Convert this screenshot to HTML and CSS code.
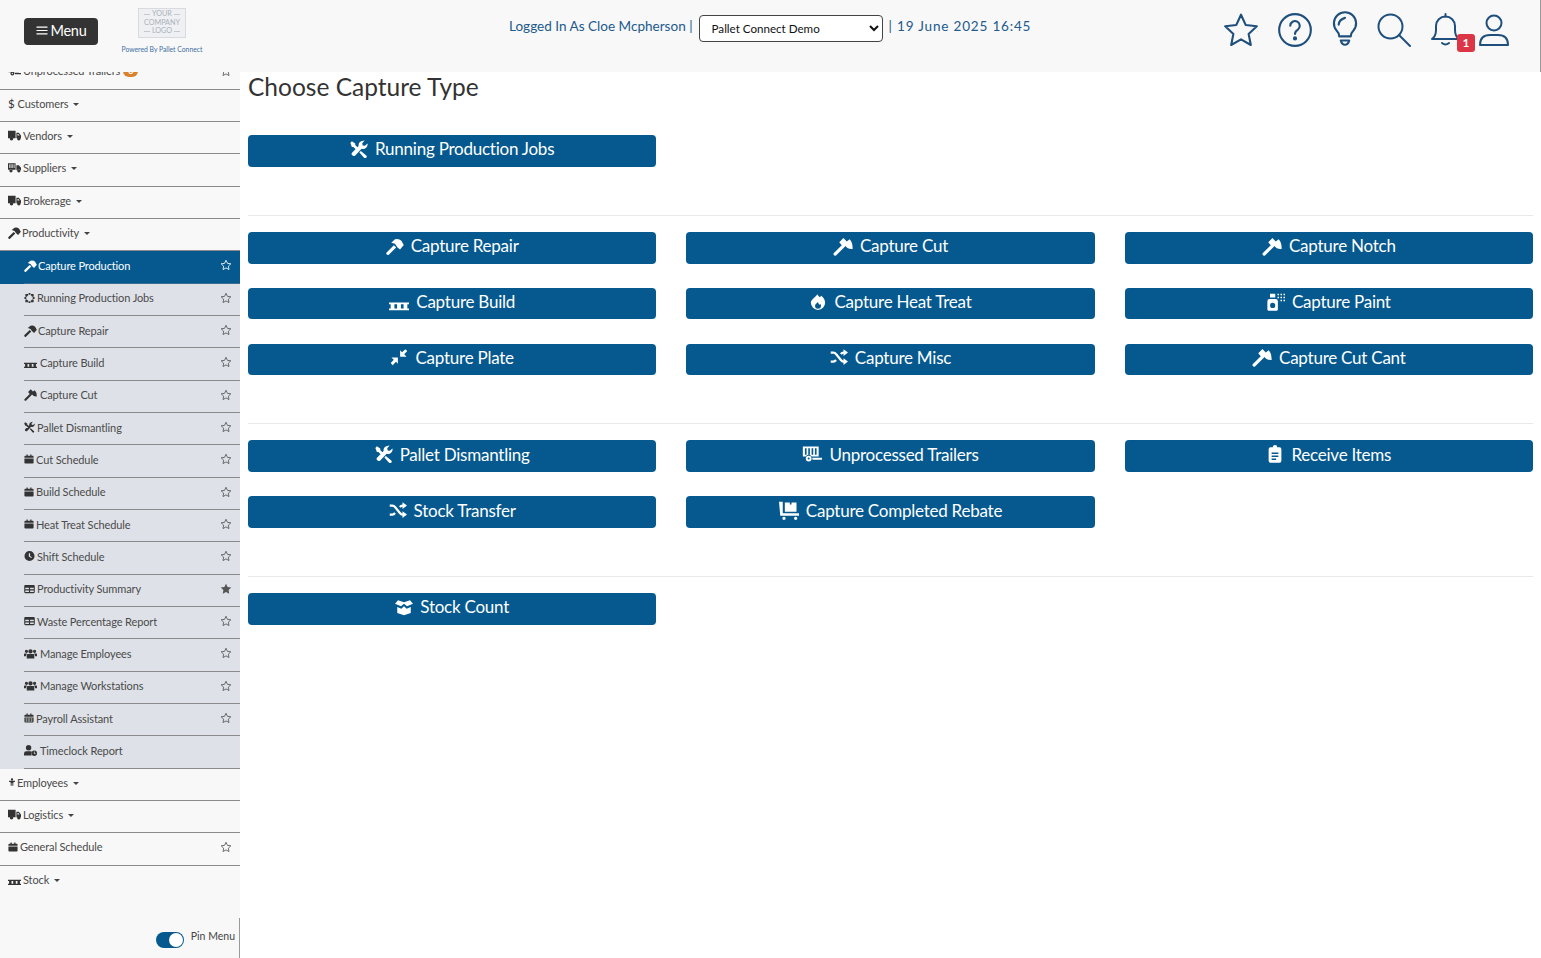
FILE: index.html
```html
<!DOCTYPE html>
<html lang="en">
<head>
<meta charset="utf-8">
<title>Choose Capture Type</title>
<link rel="stylesheet" href="styles.css">
</head>
<body>
<svg class="defs" aria-hidden="true">
  <symbol id="star" viewBox="0 0 24 24"><path d="M12 2.500l2.900 6.200 6.800.9-5 4.700 1.300 6.800-6-3.300-6 3.300 1.300-6.800-5-4.700 6.800-.9z" fill="none" stroke="currentColor" stroke-width="1.700" stroke-linejoin="round"/></symbol>
  <symbol id="starf" viewBox="0 0 24 24"><path d="M12 1.500l3.200 6.600 7.300 1-5.300 5.100 1.300 7.300-6.500-3.500-6.500 3.500 1.300-7.300L1.500 9.100l7.300-1z" fill="currentColor"/></symbol>
  <symbol id="hammer" viewBox="0 0 24 24"><path fill="currentColor" d="M.8 20.500L10.500 11l3 3-9.800 9.500q-1.500.8-2.700-.3T.8 20.500zM7 7.500l5-4.500q5-1.500 8.500 2l3.200 5.500-5 6-3.700-3-3-4.500z"/></symbol>
  <symbol id="axe" viewBox="0 0 24 24"><path fill="currentColor" d="M.8 20.800L10.500 11l2.800 2.800-9.700 9.600q-1.400.7-2.400-.2t-.4-2.400zM7.500 7.500L12.500 2.500l4 4L20 4q4 4.500 3.500 11.500-6 .5-8.500-3.500l-2 2z"/></symbol>
  <symbol id="tools" viewBox="0 0 24 24"><path fill="currentColor" d="M2.500 1.500L7 4.500v2.200l5 5-2.500 2.500-5-5H2.500L.5 4zM17.500 1a5.500 5.500 0 0 1 2-.2l-3.200 3.400.6 3 3 .6 3.400-3.300a6 6 0 0 1-7.800 7L7 20.500a2.800 2.800 0 0 1-4-4L11.500 8a6 6 0 0 1 6-7zM14.500 14.500l7.500 6.500a2.200 2.200 0 0 1-3 3l-6.500-7.500z"/></symbol>
  <symbol id="cog" viewBox="0 0 24 24"><path fill="none" stroke="currentColor" stroke-width="4" d="M5 9V5h4M15 5h4v4M19 15v4h-4M9 19H5v-4"/><path fill="currentColor" d="M10 1h4v4h-4zM10 19h4v4h-4zM1 10h4v4H1zM19 10h4v4h-4z"/></symbol>
  <symbol id="pallet" viewBox="0 0 24 24"><path fill="currentColor" d="M0 12.500h24v2.300H0zM0 19.700h24V22H0zM2 14h4.500v6H2zM9.700 14h4.600v6H9.700zM17.500 14H22v6h-4.500z"/></symbol>
  <symbol id="fire" viewBox="0 0 24 24"><path fill="currentColor" fill-rule="evenodd" d="M11 1.500q1.500 2.500 3.500 4 1-.8 1.700-2 5.300 4 5.300 9.500a9.500 9.500 0 0 1-19 0C2.500 8 8.500 6 11 1.500zM12 12q-4 2.500-4 5a4 4 0 0 0 8 0q0-1.500-1-2.500l-1.300 1.200q-1.200-1.700-1.700-3.700z"/></symbol>
  <symbol id="spray" viewBox="0 0 24 24"><path fill="currentColor" fill-rule="evenodd" d="M4 1h7v5H4zM3.500 8h8A3 3 0 0 1 14.500 11v11q0 1.500-1.500 1.500H2Q.5 23.500.5 22V11A3 3 0 0 1 3.500 8zm4 5a3.500 3.500 0 1 0 0 7 3.500 3.500 0 0 0 0-7z"/><path fill="currentColor" d="M14 1h2v2h-2zM18 1h2v2h-2zM22 1h2v2h-2zM14 5h2v2h-2zM18 5h2v2h-2zM22 5h2v2h-2zM22 9h2v2h-2zM18 9h2v2h-2z"/></symbol>
  <symbol id="compress" viewBox="0 0 24 24"><path fill="currentColor" d="M13.500 3v8a.5.5 0 0 0 .5.500h8l-3-3.200L23 4 20.500 1.500 16 5.800zM10.500 21v-8a.5.5 0 0 0-.5-.500H2l3 3.200L1 20l2.500 3L8 18.200z"/></symbol>
  <symbol id="shuffle" viewBox="0 0 24 24"><path fill="none" stroke="currentColor" stroke-width="3" d="M1 6h3.500q2 0 3.500 2l6.500 8q1.500 2 3.500 2H20M1 18h3.500q2 0 3.500-2M14.500 8q1.500-2 3.500-2h2"/><path fill="currentColor" d="M18 1.500L24 6l-6 4.500zM18 13.500l6 4.500-6 4.500z"/></symbol>
  <symbol id="trailer" viewBox="0 0 24 24"><path fill="currentColor" fill-rule="evenodd" d="M1 3h19v12h-8.500a4 4 0 0 0-7 0H1zm2.500 2v8h2V5zm4 0v8h2V5zm4 0v8h2V5zm4 0v8h2V5zM8 14a3.500 3.500 0 1 1 0 7 3.500 3.500 0 0 1 0-7zm0 2.300a1.200 1.200 0 1 0 0 2.400 1.200 1.200 0 0 0 0-2.400zM12.500 16.500H24V19H12.500z"/></symbol>
  <symbol id="clip" viewBox="0 0 24 24"><path fill="currentColor" fill-rule="evenodd" d="M9 3a3 3 0 0 1 6 0h3q2.500 0 2.500 2.500V21q0 2.500-2.500 2.500H6Q3.500 23.500 3.500 21V5.500Q3.500 3 6 3zm-1.500 7v2h9v-2zm0 4v2h9v-2zm0 4v2h6v-2z"/></symbol>
  <symbol id="dolly" viewBox="0 0 24 24"><path fill="currentColor" d="M0 2h4.500v14H24v3H1.500zM7 3h6v2.500h2V3h6v11H7zM6 20a2 2 0 1 1 0 4 2 2 0 0 1 0-4zM20 20a2 2 0 1 1 0 4 2 2 0 0 1 0-4z"/></symbol>
  <symbol id="box" viewBox="0 0 24 24"><path fill="currentColor" d="M4 3l8 2.500L20 3l4 4.500-8 3.500-4-3.500L8 11 0 7.500zM3 12l5.500 2.200L12 11l3.500 3.200L21 12v8L12 23l-9-3z"/></symbol>
  <symbol id="truck" viewBox="0 0 24 24"><path fill="currentColor" fill-rule="evenodd" d="M0 3h14v14H9.500a3.500 3.500 0 0 0-6 0H0zM15.500 7H20l4 5v5h-1a3.500 3.500 0 0 0-6 0h-1.500zM17.500 9v3h4l-2.500-3zM6.500 15a3.200 3.200 0 1 1 0 6.400 3.200 3.200 0 0 1 0-6.400zM20 15a3.200 3.200 0 1 1 0 6.400 3.200 3.200 0 0 1 0-6.400z"/></symbol>
  <symbol id="ship" viewBox="0 0 24 24"><path fill="currentColor" fill-rule="evenodd" d="M0 4h14v12H8a3 3 0 0 0-5 0H0zm2.500 2v7h2V6zm4 0v7h2V6zm4 0v7h1.500V6zM15.500 8H20l4 4.500V17h-1.500a3 3 0 0 0-5 0h-2zM5.500 15a3 3 0 1 1 0 6 3 3 0 0 1 0-6zM20 15a3 3 0 1 1 0 6 3 3 0 0 1 0-6z"/></symbol>
  <symbol id="cal" viewBox="0 0 24 24"><path fill="currentColor" d="M6 1h3v3h6V1h3v3h3q2 0 2 2v3H1V6q0-2 2-2h3zM1 11h22v10q0 2-2 2H3q-2 0-2-2z"/></symbol>
  <symbol id="calg" viewBox="0 0 24 24"><path fill="currentColor" fill-rule="evenodd" d="M6 1h3v3h6V1h3v3h3q2 0 2 2v3H1V6q0-2 2-2h3zM1 10.500h22V21q0 2-2 2H3q-2 0-2-2zM4 13v2.500h4V13zm6 0v2.500h4V13zm6 0v2.500h4V13zM4 18v2.500h4V18zm6 0v2.500h4V18zm6 0v2.500h4V18z"/></symbol>
  <symbol id="clock" viewBox="0 0 24 24"><path fill="currentColor" fill-rule="evenodd" d="M12 1a11 11 0 1 1 0 22 11 11 0 0 1 0-22zm-1.500 5v7.300l5.500 3.200 1.300-2-4-2.400V6z"/></symbol>
  <symbol id="table" viewBox="0 0 24 24"><path fill="currentColor" fill-rule="evenodd" d="M3 3h18q2.500 0 2.500 2.500v13q0 2.500-2.500 2.500H3Q.5 21 .5 18.500v-13Q.5 3 3 3zm-.2 6v3.500h8V9zm10.500 0v3.500h8V9zM2.800 15v3.500h8V15zm10.500 0v3.500h8V15z"/></symbol>
  <symbol id="users" viewBox="0 0 24 24"><path fill="currentColor" d="M12 4a4 4 0 1 1 0 8 4 4 0 0 1 0-8zM4.500 5a3 3 0 1 1 0 6 3 3 0 0 1 0-6zM19.500 5a3 3 0 1 1 0 6 3 3 0 0 1 0-6zM7 13h10q2 0 2 2v6H5v-6q0-2 2-2zM0 13q0-1 1-1h4l.5 1Q3.500 14 3.500 17H0zM24 13q0-1-1-1h-4l-.5 1q2 1 2 4H24z"/></symbol>
  <symbol id="userc" viewBox="0 0 24 24"><path fill="currentColor" fill-rule="evenodd" d="M8.500 2a5 5 0 1 1 0 10 5 5 0 0 1 0-10zM4 13.500h9q1 .2 1.300 1a7 7 0 0 0-.3 6.500H0v-3q0-4.500 4-4.500zM19 12a5 5 0 1 1 0 10 5 5 0 0 1 0-10zm-.8 2v3.500l2.600 1.200.6-1.200-1.800-.9V14z"/></symbol>
  <symbol id="person" viewBox="0 0 24 24"><path fill="currentColor" d="M12 .5a3.500 3.500 0 1 1 0 7 3.500 3.500 0 0 1 0-7zM3 8.500h18v3l-5 1.500v10h-3v-8h-2v8H8V13l-5-1.500z"/></symbol>
  <symbol id="bars" viewBox="0 0 24 24"><path fill="currentColor" d="M1 4h22v2.300H1zM1 10.800h22v2.300H1zM1 17.600h22v2.300H1z"/></symbol>
</svg>

<div class="app">
  <header class="topbar">
    <div class="brand">
      <button class="menu-btn"><svg class="ic-menu"><use href="#bars"/></svg><span>Menu</span></button>
      <div class="logo">
        <div class="logo-box"><span class="ruled">YOUR</span><span>COMPANY</span><span class="ruled">LOGO</span></div>
        <div class="powered">Powered By Pallet Connect</div>
      </div>
    </div>
    <div class="status">
      <span>Logged In As Cloe Mcpherson |</span>
      <select class="company"><option>Pallet Connect Demo</option></select>
      <span class="when">| 19 June 2025 16:45</span>
    </div>
    <nav class="tools">
      <svg class="tool tool-star" viewBox="0 0 36 36"><path d="M18 3.500l4.400 9.700 10.600 1.300-7.800 7.200 2.100 10.500-9.300-5.300-9.300 5.300 2.100-10.500L3 14.500l10.600-1.300z"/></svg>
      <svg class="tool tool-help" viewBox="0 0 36 36"><circle cx="18" cy="18" r="15"/><path d="M13.500 14a4.500 4.500 0 1 1 7 3.800q-2.500 1.500-2.500 4"/><circle class="dot" cx="18" cy="26" r="1"/></svg>
      <svg class="tool tool-bulb" viewBox="0 0 28 36"><path d="M8.500 24q0-3-2.500-5.500A10.500 10.500 0 1 1 22 18.500q-2.500 2.500-2.500 5.500z"/><path d="M8 13q.5-5 6-6.500"/><path d="M10 28h8q-1 4-4 4t-4-4z"/></svg>
      <svg class="tool tool-search" viewBox="0 0 36 36"><circle cx="14.500" cy="14.500" r="12"/><path d="M23 23l11 11"/></svg>
      <div class="bell">
        <svg class="tool tool-bell" viewBox="0 0 32 36"><path d="M3 27q4-3 4-9v-4a9.500 9.500 0 0 1 19 0v4q0 6 4 9z"/><path d="M16.500 2v2.500"/><path d="M13 31q3.500 3 7 0"/></svg>
        <span class="badge">1</span>
      </div>
      <svg class="tool tool-user" viewBox="0 0 32 36"><circle cx="16" cy="11" r="7.500"/><path d="M2 33q0-10 10-10h8q10 0 10 10z"/></svg>
    </nav>
  </header>

  <div class="body">
    <aside class="sidebar">
      <div class="menu">
        <div class="menu-list">
          <a class="row"><svg class="ic big g2"><use href="#trailer"/></svg><span>Unprocessed Trailers</span><b class="count">3</b><svg class="star"><use href="#star"/></svg></a>
          <a class="row"><span class="dollar">$</span><span class="caret">Customers</span></a>
          <a class="row"><svg class="ic big g2"><use href="#truck"/></svg><span class="caret">Vendors</span></a>
          <a class="row"><svg class="ic big g2"><use href="#ship"/></svg><span class="caret">Suppliers</span></a>
          <a class="row"><svg class="ic big g2"><use href="#truck"/></svg><span class="caret">Brokerage</span></a>
          <a class="row"><svg class="ic big g1"><use href="#hammer"/></svg><span class="caret">Productivity</span></a>
          <a class="row sub active"><svg class="ic big g1"><use href="#hammer"/></svg><span>Capture Production</span><svg class="star"><use href="#star"/></svg></a>
          <a class="row sub"><svg class="ic g2"><use href="#cog"/></svg><span>Running Production Jobs</span><svg class="star"><use href="#star"/></svg></a>
          <a class="row sub"><svg class="ic big g1"><use href="#hammer"/></svg><span>Capture Repair</span><svg class="star"><use href="#star"/></svg></a>
          <a class="row sub"><svg class="ic big g3"><use href="#pallet"/></svg><span>Capture Build</span><svg class="star"><use href="#star"/></svg></a>
          <a class="row sub"><svg class="ic big g3"><use href="#axe"/></svg><span>Capture Cut</span><svg class="star"><use href="#star"/></svg></a>
          <a class="row sub"><svg class="ic g2"><use href="#tools"/></svg><span>Pallet Dismantling</span><svg class="star"><use href="#star"/></svg></a>
          <a class="row sub"><svg class="ic small g2"><use href="#cal"/></svg><span>Cut Schedule</span><svg class="star"><use href="#star"/></svg></a>
          <a class="row sub"><svg class="ic small g2"><use href="#cal"/></svg><span>Build Schedule</span><svg class="star"><use href="#star"/></svg></a>
          <a class="row sub"><svg class="ic small g2"><use href="#cal"/></svg><span>Heat Treat Schedule</span><svg class="star"><use href="#star"/></svg></a>
          <a class="row sub"><svg class="ic g2"><use href="#clock"/></svg><span>Shift Schedule</span><svg class="star"><use href="#star"/></svg></a>
          <a class="row sub"><svg class="ic g2"><use href="#table"/></svg><span>Productivity Summary</span><svg class="star"><use href="#starf"/></svg></a>
          <a class="row sub"><svg class="ic g2"><use href="#table"/></svg><span>Waste Percentage Report</span><svg class="star"><use href="#star"/></svg></a>
          <a class="row sub"><svg class="ic big g3"><use href="#users"/></svg><span>Manage Employees</span><svg class="star"><use href="#star"/></svg></a>
          <a class="row sub"><svg class="ic big g3"><use href="#users"/></svg><span>Manage Workstations</span><svg class="star"><use href="#star"/></svg></a>
          <a class="row sub"><svg class="ic small g2"><use href="#calg"/></svg><span>Payroll Assistant</span><svg class="star"><use href="#star"/></svg></a>
          <a class="row sub"><svg class="ic big g3"><use href="#userc"/></svg><span>Timeclock Report</span></a>
          <a class="row"><svg class="ic thin"><use href="#person"/></svg><span class="caret">Employees</span></a>
          <a class="row"><svg class="ic big g2"><use href="#truck"/></svg><span class="caret">Logistics</span></a>
          <a class="row"><svg class="ic small g2"><use href="#cal"/></svg><span>General Schedule</span><svg class="star"><use href="#star"/></svg></a>
          <a class="row plain"><svg class="ic big g2"><use href="#pallet"/></svg><span class="caret">Stock</span></a>
        </div>
      </div>
      <div class="pin">
        <span class="switch"></span>
        <span class="pin-label">Pin Menu</span>
      </div>
    </aside>

    <main class="content">
      <h1 class="title">Choose Capture Type</h1>
      <section class="group">
        <a class="btn"><svg class="bi"><use href="#tools"/></svg>Running Production Jobs</a>
      </section>
      <hr class="rule">
      <section class="group">
        <a class="btn"><svg class="bi"><use href="#hammer"/></svg>Capture Repair</a>
        <a class="btn"><svg class="bi wide"><use href="#axe"/></svg>Capture Cut</a>
        <a class="btn"><svg class="bi wide"><use href="#axe"/></svg>Capture Notch</a>
        <a class="btn"><svg class="bi wide"><use href="#pallet"/></svg>Capture Build</a>
        <a class="btn"><svg class="bi"><use href="#fire"/></svg>Capture Heat Treat</a>
        <a class="btn"><svg class="bi"><use href="#spray"/></svg>Capture Paint</a>
        <a class="btn"><svg class="bi"><use href="#compress"/></svg>Capture Plate</a>
        <a class="btn"><svg class="bi"><use href="#shuffle"/></svg>Capture Misc</a>
        <a class="btn"><svg class="bi wide"><use href="#axe"/></svg>Capture Cut Cant</a>
      </section>
      <hr class="rule">
      <section class="group">
        <a class="btn"><svg class="bi"><use href="#tools"/></svg>Pallet Dismantling</a>
        <a class="btn"><svg class="bi wide"><use href="#trailer"/></svg>Unprocessed Trailers</a>
        <a class="btn"><svg class="bi"><use href="#clip"/></svg>Receive Items</a>
        <a class="btn"><svg class="bi"><use href="#shuffle"/></svg>Stock Transfer</a>
        <a class="btn"><svg class="bi wide"><use href="#dolly"/></svg>Capture Completed Rebate</a>
      </section>
      <hr class="rule">
      <section class="group">
        <a class="btn"><svg class="bi"><use href="#box"/></svg>Stock Count</a>
      </section>
    </main>
  </div>
</div>
</body>
</html>
```
FILE: styles.css
```css
* { box-sizing: border-box; }
html, body { margin: 0; height: 100%; overflow: hidden; }
body { font-family: "Lato", "Noto Sans", sans-serif; color: #333; background: #fff; }
.defs { position: absolute; width: 0; height: 0; }

.app { display: flex; flex-direction: column; height: 958px; }

/* top bar */
.topbar { height: 72px; flex: none; background: #f8f8f8; border-right: 1px solid #999; position: relative; display: flex; }
.brand { width: 240px; flex: none; display: flex; padding: 8px 0 0 24px; }
.menu-btn { width: 74px; height: 27px; margin-top: 10px; padding: 0 0 3px; border: 0; border-radius: 4px; background: #333; color: #fff; font: 400 14.500px "Lato", sans-serif; letter-spacing: -.3px; display: flex; align-items: center; justify-content: center; gap: 3px; }
.ic-menu { width: 12px; height: 13px; }
.logo { margin-left: 24px; width: 80px; display: flex; flex-direction: column; align-items: center; }
.logo-box { width: 48px; height: 30px; border: 1px solid #d8dadd; background: #eef0f3; color: #aab0b8; font-size: 7.200px; line-height: 8.500px; display: flex; flex-direction: column; align-items: center; justify-content: center; }
.ruled { display: flex; align-items: center; gap: 2px; }
.ruled::before, .ruled::after { content: ""; width: 6px; height: 1px; background: #c5c9ce; }
.powered { margin-top: 7px; font-size: 6.800px; color: #3f6fa5; white-space: nowrap; }

.status { position: absolute; left: 509px; top: 15px; height: 27px; display: flex; align-items: center; gap: 6px; color: #225a8c; font-size: 13.550px; white-space: nowrap; }
.status span { padding-bottom: 5px; }
.company { width: 184px; height: 27px; padding: 0 0 0 8px; background: #fff; border: 1px solid #444; border-radius: 4px; color: #111; font: 400 11.600px "Lato", sans-serif; }
.when { letter-spacing: .8px; }

.tools { position: absolute; left: 1222px; top: 10px; width: 290px; height: 40px; display: flex; align-items: center; }
.tool { fill: none; stroke: #1f4f7c; stroke-width: 2; stroke-linejoin: round; stroke-linecap: round; flex: none; }
.tool .dot { fill: #1f4f7c; }
.tool-star { width: 38px; height: 38px; }
.tool-help { width: 38px; height: 38px; margin-left: 16px; }
.tool-bulb { width: 30px; height: 38px; margin-left: 16px; }
.tool-search { width: 36px; height: 36px; margin-left: 15.500px; }
.bell { position: relative; width: 32px; height: 36px; margin-left: 17.500px; flex: none; }
.tool-bell { width: 32px; height: 36px; }
.badge { position: absolute; left: 28px; top: 22px; width: 18px; height: 18px; border-radius: 3px; background: #dc3545; color: #fff; font-size: 12px; font-weight: 700; line-height: 18px; text-align: center; }
.tool-user { width: 32px; height: 36px; margin-left: 17px; }

/* layout */
.body { flex: 1; display: flex; min-height: 0; }
.sidebar { width: 240px; flex: none; background: #f8f8f8; display: flex; flex-direction: column; }
.menu { flex: 1; min-height: 0; overflow: hidden; }
.menu-list { margin-top: -14.700px; }

.row { height: 32.330px; display: flex; align-items: center; padding: 0 8px 4px; border-bottom: 1px solid #8a8a8a; font-size: 11px; color: #4a4a4a; white-space: nowrap; letter-spacing: -.12px; }
.row.plain { border-bottom: 0; }
.row.sub { padding-left: 24px; background: #dee2e8; border-bottom: 0; position: relative; }
.row.sub::after { content: ""; position: absolute; left: 24px; right: 0; bottom: 0; height: 1px; background: #8a8a8a; }
.row.active { background: #05598f; color: #fff; }
.row.active::after { background: #3b6e92; }
.ic { width: 11px; height: 12px; flex: none; color: #333; }
.ic.big { width: 13px; height: 13px; }
.ic.small { width: 10px; }
.ic.thin { width: 8px; margin-right: 1px; }
.g1 { margin-right: 1px; }
.g2 { margin-right: 2px; }
.g3 { margin-right: 3px; }
.active .ic { color: #fff; }
.dollar { margin-right: 3px; font-size: 11.500px; color: #333; }
.star { width: 12px; height: 12px; margin-left: auto; flex: none; color: #555; }
.active .star { color: #fff; }
.count { margin-left: 3px; width: 15px; height: 12px; border-radius: 7px; background: #d9822b; color: #fff; font-size: 9px; line-height: 12px; text-align: center; }
.caret::after { content: ""; display: inline-block; margin-left: 5px; vertical-align: 2px; border-top: 3px solid #444; border-left: 3px solid transparent; border-right: 3px solid transparent; }

.pin { height: 40px; flex: none; border-right: 1px solid #999; display: flex; justify-content: flex-end; padding: 13px 4px 0 0; font-size: 10.500px; color: #444; }
.switch { width: 28px; height: 16px; margin-top: 1px; margin-right: 7px; border-radius: 8px; background: #05598f; position: relative; }
.switch::after { content: ""; position: absolute; right: 1px; top: 1px; width: 14px; height: 14px; border-radius: 50%; background: #fff; }
.pin-label { line-height: 11px; }

/* content */
.content { flex: 1; padding: 0 8px; min-width: 0; }
.title { margin: 0; height: 63px; font-size: 24.500px; line-height: 30px; font-weight: 400; color: #333; }
.group { display: grid; grid-template-columns: repeat(3, 1fr); column-gap: 30px; row-gap: 24.100px; padding-bottom: 48px; }
.rule { margin: 0 0 16px; border: 0; border-top: 1px solid #e9e9e9; }
.btn { height: 31.800px; display: flex; align-items: center; justify-content: center; gap: 7px; background: #05598f; color: #fff; border-radius: 4px; font-size: 17px; letter-spacing: -.24px; padding-bottom: 4px; white-space: nowrap; }
.bi { width: 18px; height: 18px; flex: none; color: #fff; }
.bi.wide { width: 20px; height: 20px; }
```
